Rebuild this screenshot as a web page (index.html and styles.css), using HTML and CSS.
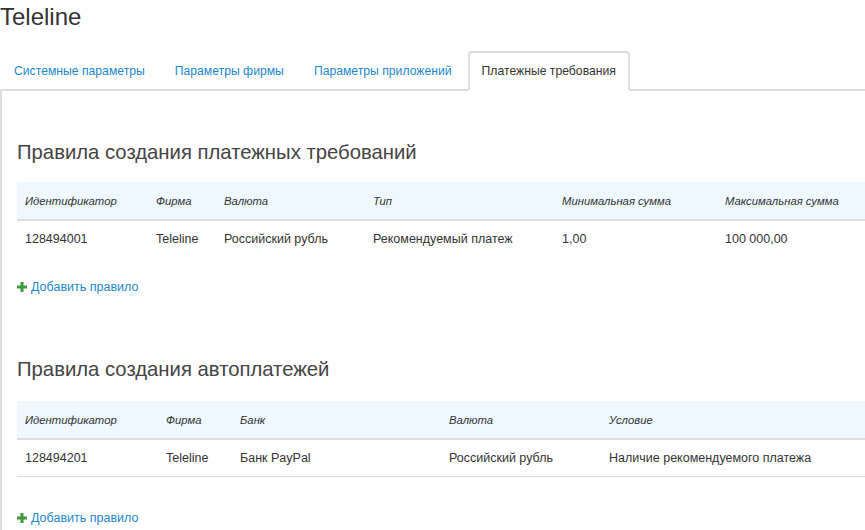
FILE: index.html
```html
<!DOCTYPE html>
<html lang="ru">
<head>
<meta charset="utf-8">
<title>Teleline</title>
<link rel="stylesheet" href="styles.css">
</head>
<body>
<div class="page">
  <h1 class="title">Teleline</h1>
  <ul class="tabs">
    <li class="tab"><a href="#">Системные параметры</a></li>
    <li class="tab"><a href="#">Параметры фирмы</a></li>
    <li class="tab"><a href="#">Параметры приложений</a></li>
    <li class="tab active"><a href="#">Платежные требования</a></li>
  </ul>
  <div class="panel">
    <h2 class="section-title first">Правила создания платежных требований</h2>
    <table class="grid grid-claims">
      <thead>
        <tr>
          <th class="c1">Идентификатор</th>
          <th class="c2">Фирма</th>
          <th class="c3">Валюта</th>
          <th class="c4">Тип</th>
          <th class="c5">Минимальная сумма</th>
          <th class="c6">Максимальная сумма</th>
        </tr>
      </thead>
      <tbody>
        <tr>
          <td>128494001</td>
          <td>Teleline</td>
          <td>Российский рубль</td>
          <td>Рекомендуемый платеж</td>
          <td>1,00</td>
          <td>100 000,00</td>
        </tr>
      </tbody>
    </table>
    <a class="add-link" href="#"><svg class="plus" width="10" height="10" viewBox="0 0 10 10" aria-hidden="true"><rect x="3.5" y="0" width="3" height="10" fill="#3d9b3d"/><rect x="0" y="3.5" width="10" height="3" fill="#3d9b3d"/></svg>Добавить правило</a>

    <h2 class="section-title second">Правила создания автоплатежей</h2>
    <table class="grid grid-auto">
      <thead>
        <tr>
          <th class="c1">Идентификатор</th>
          <th class="c2">Фирма</th>
          <th class="c3">Банк</th>
          <th class="c4">Валюта</th>
          <th class="c5">Условие</th>
        </tr>
      </thead>
      <tbody>
        <tr class="bordered">
          <td>128494201</td>
          <td>Teleline</td>
          <td>Банк PayPal</td>
          <td>Российский рубль</td>
          <td>Наличие рекомендуемого платежа</td>
        </tr>
      </tbody>
    </table>
    <a class="add-link add-link-low" href="#"><svg class="plus" width="10" height="10" viewBox="0 0 10 10" aria-hidden="true"><rect x="3.5" y="0" width="3" height="10" fill="#3d9b3d"/><rect x="0" y="3.5" width="10" height="3" fill="#3d9b3d"/></svg>Добавить правило</a>
  </div>
</div>
</body>
</html>
```

FILE: styles.css
```css
html, body {
  margin: 0;
  padding: 0;
  background: #fff;
}

body {
  font-family: "Liberation Sans", Arial, sans-serif;
  color: #333;
  width: 865px;
  height: 530px;
  overflow: hidden;
}

.page {
  width: 865px;
  overflow: hidden;
}

.title {
  margin: 0;
  padding-top: 2px;
  font-size: 24px;
  line-height: 30px;
  font-weight: normal;
  color: #333;
}

.tabs {
  list-style: none;
  margin: 19px 0 0 0;
  padding: 0;
  display: flex;
  border-bottom: 2px solid #ddd;
}

.tab {
  margin: 0 2px -2px 0;
  border: 2px solid transparent;
  border-radius: 4px 4px 0 0;
  height: 36px;
}

.tab a {
  display: block;
  padding: 0 12px;
  line-height: 36px;
  font-size: 12.2px;
  color: #1a87d0;
  text-decoration: none;
  white-space: nowrap;
}

.tab.active {
  border-color: #ddd;
  border-bottom-color: #fff;
  background: #fff;
}

.tab.active a {
  color: #333;
}

.panel {
  border-left: 2px solid #ddd;
  padding: 1px 0 0 15px;
  height: 438px;
}

.section-title {
  margin: 0;
  font-size: 20.3px;
  line-height: 24px;
  font-weight: normal;
  color: #444;
  white-space: nowrap;
}

.section-title.first {
  margin-top: 48px;
}

.section-title.second {
  margin-top: 61px;
}

.grid {
  border-collapse: collapse;
  table-layout: fixed;
  width: 880px;
  font-size: 12.5px;
}

.grid-claims {
  margin-top: 18px;
}

.grid-auto {
  margin-top: 20px;
}

.grid th {
  background: #eef8fe;
  font-weight: normal;
  font-style: italic;
  font-size: 11.3px;
  text-align: left;
  height: 37px;
  padding: 0 0 0 8px;
  border-bottom: 2px solid #ddd;
  color: #333;
  white-space: nowrap;
}

.grid td {
  height: 36px;
  padding: 0 0 0 8px;
  color: #333;
  white-space: nowrap;
}

.grid .bordered td {
  border-bottom: 1px solid #ddd;
}

.grid-claims .c1 { width: 123px; }
.grid-claims .c2 { width: 60px; }
.grid-claims .c3 { width: 141px; }
.grid-claims .c4 { width: 181px; }
.grid-claims .c5 { width: 155px; }
.grid-claims .c6 { width: auto; }

.grid-auto .c1 { width: 133px; }
.grid-auto .c2 { width: 66px; }
.grid-auto .c3 { width: 201px; }
.grid-auto .c4 { width: 152px; }
.grid-auto .c5 { width: auto; }

.add-link {
  display: inline-flex;
  align-items: center;
  margin-top: 21px;
  font-size: 12.5px;
  line-height: 18px;
  color: #1a87d0;
  text-decoration: none;
}

.add-link-low {
  margin-top: 32px;
}

.plus {
  margin-right: 4px;
}
```
